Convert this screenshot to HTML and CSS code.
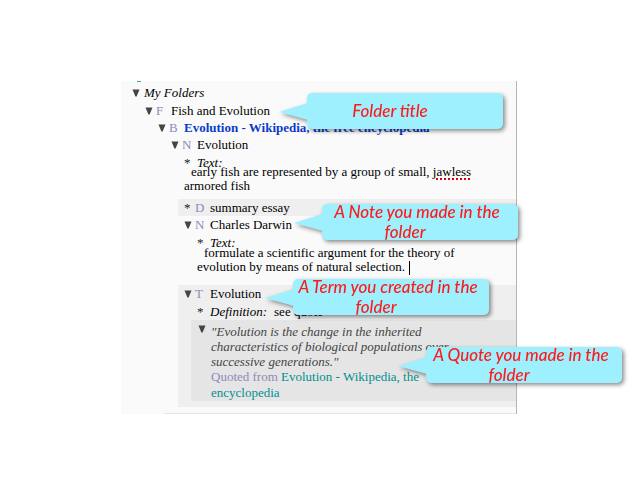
FILE: index.html
```html
<!DOCTYPE html>
<html lang="en">
<head>
<meta charset="utf-8">
<title>My Folders</title>
<link rel="stylesheet" href="styles.css">
</head>
<body>
<svg width="0" height="0" class="defs" aria-hidden="true">
  <symbol id="down" viewBox="0 0 8 8"><path d="M0.5 0.5H7.5L4.6 7.5H3.4Z"/></symbol>
  <symbol id="tail" viewBox="0 0 30 18"><path d="M0 9L29 0V17Z"/></symbol>
</svg>
<main class="panel">
  <span class="fragment"></span>
  <div class="row"><button class="toggle" aria-label="Toggle My Folders"><svg><use href="#down"/></svg></button><em class="label root">My Folders</em></div>
  <div class="level">
    <div class="row tall"><button class="toggle" aria-label="Toggle folder"><svg><use href="#down"/></svg></button><span class="kind">F</span><span>Fish and Evolution</span>
      <aside class="callout folder"><svg class="tail"><use href="#tail"/></svg><p>Folder title</p></aside>
    </div>
    <div class="level">
      <div class="row"><button class="toggle" aria-label="Toggle bookmark"><svg><use href="#down"/></svg></button><span class="kind">B</span><a class="bookmark" href="#">Evolution - Wikipedia, the free encyclopedia</a></div>
      <div class="level">
        <div class="row"><button class="toggle" aria-label="Toggle note"><svg><use href="#down"/></svg></button><span class="kind">N</span><span>Evolution</span></div>
        <div class="level">
          <div class="row tall"><span class="star">*</span><em class="label">Text:</em></div>
          <p class="note">early fish are represented by a group of small, <span class="misspelt">jawless</span><br>armored fish</p>
          <div class="row shaded"><span class="star">*</span><span class="kind">D</span><span>summary essay</span></div>
          <div class="row"><button class="toggle" aria-label="Toggle note"><svg><use href="#down"/></svg></button><span class="kind">N</span><span>Charles Darwin</span>
            <aside class="callout made-note"><svg class="tail"><use href="#tail"/></svg><p>A Note you made in the <span class="tail-word">folder</span></p></aside>
          </div>
          <div class="level">
            <div class="row tall"><span class="star">*</span><em class="label">Text:</em></div>
            <p class="note last">formulate a scientific argument for the theory of<br>evolution by means of natural selection.<span class="caret"></span></p>
          </div>
          <section class="shaded term">
            <div class="row"><button class="toggle" aria-label="Toggle term"><svg><use href="#down"/></svg></button><span class="kind">T</span><span>Evolution</span>
              <aside class="callout made-term"><svg class="tail"><use href="#tail"/></svg><p>A Term you created in the <span class="tail-word">folder</span></p></aside>
            </div>
            <div class="level">
              <div class="row tall"><span class="star">*</span><em class="label">Definition:</em><span class="value">see quote</span></div>
              <div class="quote">
                <button class="toggle" aria-label="Toggle quote"><svg><use href="#down"/></svg></button>
                <div>
                  <blockquote>"Evolution is the change in the inherited<br>characteristics of biological populations over<br>successive generations."</blockquote>
                  <p class="source">Quoted from <a href="#">Evolution - Wikipedia, the<br>encyclopedia</a></p>
                </div>
                <aside class="callout made-quote"><svg class="tail"><use href="#tail"/></svg><p>A Quote you made in the <span class="tail-word">folder</span></p></aside>
              </div>
            </div>
          </section>
        </div>
      </div>
    </div>
  </div>
  <hr>
</main>
</body>
</html>
```
FILE: styles.css
```css
* { box-sizing: border-box; }
body {
  margin: 0;
  padding: 81px 123px 0 121px;
  background: #fff;
  color: #000;
  font: 13px/17px "Liberation Serif", "Times New Roman", serif;
}
p, blockquote { margin: 0; }
a { text-decoration: none; }
.defs { position: absolute; }
.panel {
  position: relative;
  padding: 3px 0 0 11px;
  background: #fafafa;
  border-right: 1px solid #b4b4b4;
  white-space: nowrap;
}
.fragment {
  position: absolute;
  top: 0;
  left: 16px;
  width: 4px;
  height: 1px;
  background: #4aa3a3;
}
.level { padding-left: 13px; }
.row {
  position: relative;
  display: flex;
  align-items: center;
  height: 17px;
}
.tall { height: 18px; }
.toggle {
  flex: none;
  width: 9px;
  height: 8px;
  margin: 1px 2px 0 0;
  padding: 0;
  border: 0;
  background: none;
}
.toggle svg { display: block; width: 8px; height: 8px; fill: #444; }
.label.root { padding-left: 1px; }
.kind { width: 15px; color: #8c8cb8; }
.star { width: 11px; color: #223; }
.star + .label { padding-left: 2px; }
.value { padding-left: 7px; }
.bookmark { font-weight: bold; color: #0a3acb; }
.note {
  margin: -6px 0 6px;
  line-height: 14px;
  text-indent: 7px;
}
.note.last { margin: -5px 0 10px; }
.misspelt { text-decoration: underline dotted #e00000 2px; text-underline-offset: 2px; }
.caret {
  display: inline-block;
  width: 1px;
  height: 14px;
  margin-left: 4px;
  background: #000;
  vertical-align: middle;
}
.shaded {
  margin-left: -6px;
  padding-left: 6px;
  background: #efefef;
}
.term { padding-bottom: 6px; }
.quote {
  position: relative;
  display: flex;
  margin-left: -6px;
  padding: 4px 0 0 7px;
  background: #e5e5e5;
  color: #444;
}
.quote .toggle { margin: 1px 4px 0 0; }
blockquote { font-style: italic; line-height: 15px; }
.source { line-height: 16px; color: #8c8cb8; }
.source a { color: #009090; }
hr {
  height: 1px;
  margin: 6px 0 0 32px;
  border: 0;
  background: #e4e4e4;
}
.callout {
  position: absolute;
  z-index: 1;
  display: flex;
  align-items: center;
  justify-content: center;
  width: 196px;
  height: 36px;
  padding: 0 8px 0 2px;
  border-radius: 5px;
  background: #9ff0fe;
  filter: drop-shadow(2px 2px 2px rgba(0, 0, 0, 0.45));
  color: #ff1a1a;
  font: italic 500 17px/20px Lato, "Gill Sans", sans-serif;
  text-align: center;
  white-space: normal;
}
.tail-word { display: block; padding-right: 24px; }
.tail {
  position: absolute;
  top: 10px;
  left: -28px;
  width: 30px;
  height: 18px;
  fill: #9ff0fe;
}
.folder { top: -8px; left: 162px; padding-right: 32px; }
.made-note { top: -12px; left: 138px; }
.made-term { top: -6px; left: 109px; }
.made-quote { top: 27px; left: 235px; }
```
